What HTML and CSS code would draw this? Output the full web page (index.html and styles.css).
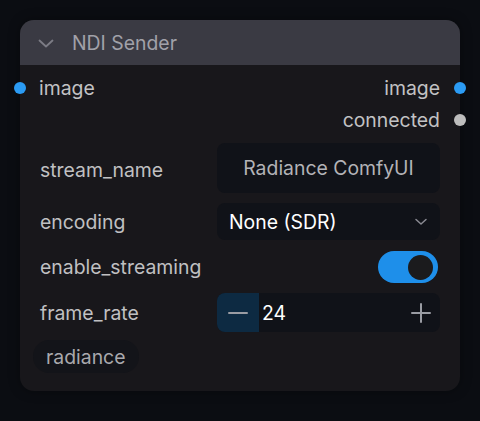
FILE: index.html
```html
<!DOCTYPE html>
<html>
<head>
<meta charset="utf-8">
<link rel="stylesheet" href="styles.css">
</head>
<body>
<div class="node">
  <div class="header">
    <svg class="chev" width="16" height="9" viewBox="0 0 16 9"><path d="M1.5 1.5 L8 7.5 L14.5 1.5" fill="none" stroke="#7c7c85" stroke-width="1.8" stroke-linecap="round" stroke-linejoin="round"/></svg>
    <span class="title">NDI Sender</span>
  </div>
  <div class="slots">
    <div class="slot-row">
      <div class="slot in"><span class="dot blue"></span><span class="slot-label">image</span></div>
      <div class="slot out"><span class="slot-label">image</span><span class="dot blue"></span></div>
    </div>
    <div class="slot-row">
      <div class="slot out"><span class="slot-label">connected</span><span class="dot grey"></span></div>
    </div>
  </div>
  <div class="widgets">
    <div class="wrow r-stream">
      <span class="wlabel">stream_name</span>
      <div class="field text-field">Radiance ComfyUI</div>
    </div>
    <div class="wrow r-enc">
      <span class="wlabel">encoding</span>
      <div class="field select-field"><span class="val">None (SDR)</span>
        <svg width="14" height="8" viewBox="0 0 14 8"><path d="M2 1.5 L7 6 L12 1.5" fill="none" stroke="#8a8a92" stroke-width="1.5" stroke-linecap="round" stroke-linejoin="round"/></svg>
      </div>
    </div>
    <div class="wrow r-toggle">
      <span class="wlabel">enable_streaming</span>
      <div class="toggle"><span class="knob"></span></div>
    </div>
    <div class="wrow r-num">
      <span class="wlabel">frame_rate</span>
      <div class="field num-field">
        <span class="minus"><svg width="20" height="20" viewBox="0 0 20 20"><path d="M1 10 H19" stroke="#9a9ca3" stroke-width="2" stroke-linecap="round"/></svg></span>
        <span class="val">24</span>
        <span class="plus"><svg width="20" height="20" viewBox="0 0 20 20"><path d="M1 10 H19 M10 1 V19" stroke="#9a9ca3" stroke-width="2" stroke-linecap="round"/></svg></span>
      </div>
    </div>
    <div class="wrow r-chip">
      <span class="chip">radiance</span>
    </div>
  </div>
</div>
</body>
</html>
```
FILE: styles.css
```css
html, body { margin: 0; padding: 0; }
body {
  background: #0b0d12;
  width: 480px;
  height: 421px;
  padding: 20px 0 0 20px;
  box-sizing: border-box;
  font-family: Inter, "Noto Sans", sans-serif;
  font-size: 19.4px;
  color: #bdbdbf;
}
.node {
  width: 440px;
  height: 371px;
  background: #18171b;
  border-radius: 14px;
  box-shadow: 0 0 12px rgba(0,0,0,0.35);
  position: relative;
}
.header {
  height: 45px;
  background: #3a3a43;
  border-radius: 14px 14px 0 0;
  display: flex;
  align-items: center;
  padding-left: 18px;
  gap: 18px;
}
.chev { margin-top: 1px; }
.title { color: #a1a1a9; }
.slots { padding-top: 7px; }
.slot-row {
  height: 32px;
  display: flex;
  align-items: center;
  justify-content: space-between;
}
.slot-row:last-child { justify-content: flex-end; }
.slot { display: flex; align-items: center; }
.slot.in { margin-left: -6px; gap: 13px; }
.slot.out { margin-right: -6px; gap: 14px; }
.dot { width: 12px; height: 12px; border-radius: 50%; display: inline-block; }
.dot.blue { background: #2b9bf4; }
.dot.grey { background: #bdbdbd; }
.slot-label { color: #c2c2c4; }
.widgets {
  padding: 7px 20px 0 20px;
  display: flex;
  flex-direction: column;
}
.wrow { display: flex; align-items: center; justify-content: space-between; }
.wlabel { color: #c0c0c2; }
.r-stream { height: 50px; }
.r-stream .wlabel { margin-top: 3px; }
.r-enc { height: 37px; margin-top: 10px; }
.r-toggle { height: 32px; margin-top: 11px; padding-right: 2px; }
.r-num { height: 39px; margin-top: 10px; }
.r-chip { height: 33px; margin-top: 8px; margin-left: -7px; }
.field {
  width: 223px;
  height: 100%;
  background: #101218;
  border-radius: 8px;
  box-sizing: border-box;
}
.text-field {
  display: flex; align-items: center; justify-content: center;
  color: #b3b3b7;
}
.select-field {
  display: flex; align-items: center; justify-content: space-between;
  padding: 0 12px 0 12px;
  color: #ffffff;
}
.toggle {
  width: 60px; height: 32px;
  border-radius: 16px;
  background: #1e8fea;
  display: flex; align-items: center; justify-content: flex-end;
  padding-right: 5px;
  box-sizing: border-box;
}
.knob { width: 25px; height: 25px; border-radius: 50%; background: #1b1b1d; }
.num-field {
  display: flex; align-items: center;
  padding-right: 9px;
}
.minus {
  width: 42px; height: 100%;
  background: #0d2a42;
  border-radius: 8px 0 0 8px;
  display: flex; align-items: center; justify-content: center;
}
.num-field .val { color: #ffffff; margin-left: 3px; flex: 1; }
.plus { display: flex; align-items: center; }
.chip {
  height: 33px;
  display: flex; align-items: center;
  padding: 0 13px;
  background: #131419;
  border-radius: 16px;
  color: #a9a9ad;
}
```
